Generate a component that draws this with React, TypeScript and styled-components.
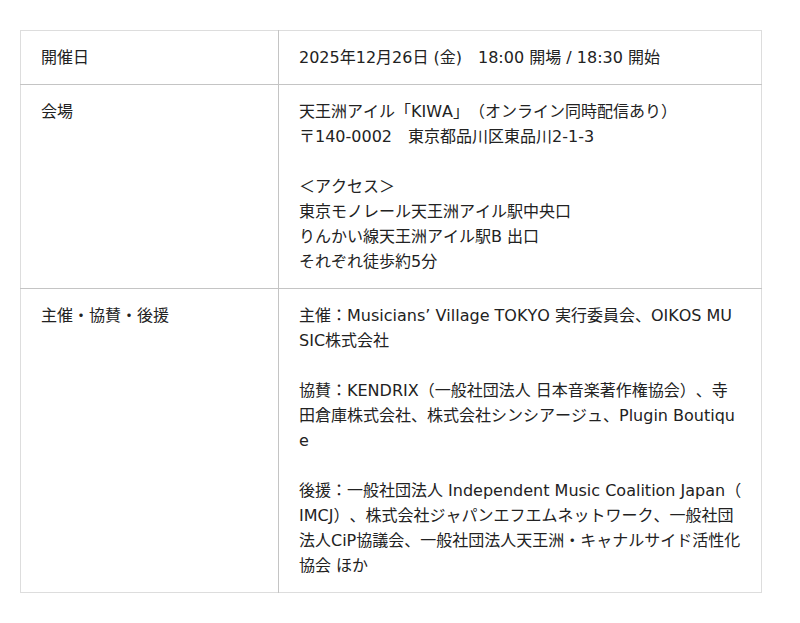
import styled, { createGlobalStyle } from "styled-components";

const GlobalStyle = createGlobalStyle`
    body {
        margin: 0;
        background: #fff;
        font-family: "DejaVu Sans", "Noto Sans CJK JP", sans-serif;
        color: #222;
    }
`

const Page = styled.div`
    padding: 30px 20px;
`

const InfoTable = styled.table`
    width: 742px;
    border-collapse: collapse;
    border: 1px solid #ddd;
    font-size: 16px;
    line-height: 25px;
    font-kerning: none;
    text-spacing-trim: space-all;
`

const Row = styled.tr`
    border-bottom: 1px solid #c4c4c4;
    &:last-child {
        border-bottom: 1px solid #ddd;
    }
`

const Label = styled.th`
    width: 217px;
    padding: 14px 20px;
    text-align: left;
    vertical-align: top;
    font-weight: normal;
    border-right: 1px solid #c4c4c4;
`

const Value = styled.td`
    padding: 14px 19px 14px 20px;
    vertical-align: top;
    word-break: break-all;
    line-break: anywhere;
`

const Paragraph = styled.p`
    margin: 0;
    & + & {
        margin-top: 25px;
    }
`

type InfoRow = {
    label: string
    paragraphs: string[][]
}

const rows: InfoRow[] = [
    {
        label: '開催日',
        paragraphs: [['2025年12月26日 (金)\u300018:00 開場 / 18:30 開始']],
    },
    {
        label: '会場',
        paragraphs: [
            ['天王洲アイル「KIWA」（オンライン同時配信あり）', '〒140-0002\u3000東京都品川区東品川2-1-3'],
            ['＜アクセス＞', '東京モノレール天王洲アイル駅中央口', 'りんかい線天王洲アイル駅B 出口', 'それぞれ徒歩約5分'],
        ],
    },
    {
        label: '主催・協賛・後援',
        paragraphs: [
            ['主催：Musicians’ Village TOKYO 実行委員会、OIKOS MUSIC株式会社'],
            ['協賛：KENDRIX（一般社団法人 日本音楽著作権協会）、寺田倉庫株式会社、株式会社シンシアージュ、Plugin Boutique'],
            ['後援：一般社団法人 Independent Music Coalition Japan（IMCJ）、株式会社ジャパンエフエムネットワーク、一般社団法人CiP協議会、一般社団法人天王洲・キャナルサイド活性化協会 ほか'],
        ],
    },
]

export default function App() {
    return (
        <Page>
            <GlobalStyle />
            <InfoTable>
                <tbody>
                    {rows.map(row => (
                        <Row key={row.label}>
                            <Label>{row.label}</Label>
                            <Value>
                                {row.paragraphs.map((lines, i) => (
                                    <Paragraph key={i}>
                                        {lines.map((line, j) => (
                                            <span key={j}>
                                                {j > 0 && <br />}
                                                {line}
                                            </span>
                                        ))}
                                    </Paragraph>
                                ))}
                            </Value>
                        </Row>
                    ))}
                </tbody>
            </InfoTable>
        </Page>
    )
}
